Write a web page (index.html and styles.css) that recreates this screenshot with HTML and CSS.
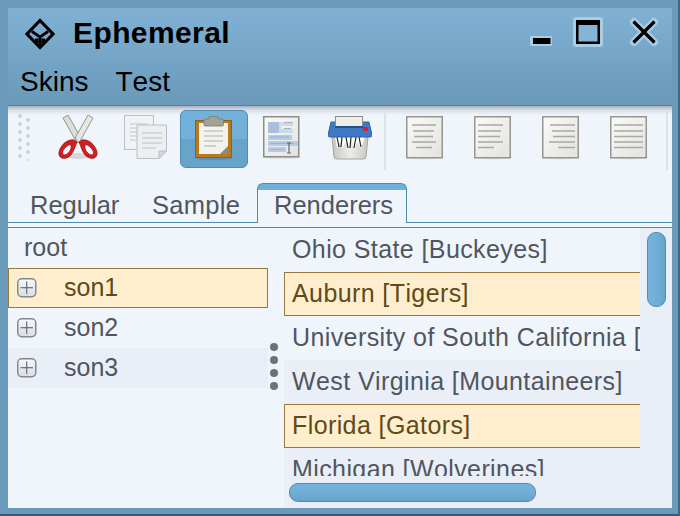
FILE: index.html
```html
<!DOCTYPE html>
<html lang="en">
<head>
<meta charset="utf-8">
<title>Ephemeral</title>
<link rel="stylesheet" href="styles.css">
</head>
<body>
<svg class="defs" width="0" height="0" aria-hidden="true">
  <defs>
    <linearGradient id="pg" x1="0" y1="0" x2="1" y2="1"><stop offset="0" stop-color="#fafaf8"/><stop offset="1" stop-color="#e2e2de"/></linearGradient>
    <linearGradient id="btn" x1="0" y1="0" x2="0" y2="1"><stop offset="0" stop-color="#f6f8fa"/><stop offset="1" stop-color="#d8dde3"/></linearGradient>
    <linearGradient id="bin" x1="0" y1="0" x2="1" y2="0"><stop offset="0" stop-color="#c4c5c0"/><stop offset=".5" stop-color="#ecece8"/><stop offset="1" stop-color="#c8c9c4"/></linearGradient>
  </defs>
</svg>
<div class="window">
  <header class="chrome">
    <div class="titlebar">
      <svg class="logo" width="30" height="32" viewBox="0 0 30 32">
        <path d="M15 2.500 L28 16 L15 29.500 L2 16 Z" fill="none" stroke="#000" stroke-width="3.200"/>
        <path d="M7 13.500 L15 19 L23 13.500 M15 19 V29 M10 22 H12 V25 M20 22 H18 V25" fill="none" stroke="#000" stroke-width="2.800"/>
      </svg>
      <span class="app-title">Ephemeral</span>
      <div class="controls">
        <svg class="ctl ctl-min" width="22" height="10" viewBox="0 0 22 10"><rect width="22" height="10" rx="1" fill="#a9cde4"/><rect x="3" y="2" width="17.500" height="6" fill="#000"/></svg>
        <svg class="ctl ctl-max" width="30" height="30" viewBox="0 0 30 30"><rect width="30" height="30" rx="3" fill="#a9cde4"/><rect x="4.250" y="4.250" width="21.500" height="21.500" fill="#86b4d4" stroke="#000" stroke-width="2.500"/><rect x="3" y="3" width="24" height="5" fill="#000"/></svg>
        <svg class="ctl ctl-close" width="30" height="30" viewBox="0 0 30 30"><path d="M5 5 L25 25 M25 5 L5 25" stroke="#a9cde4" stroke-width="8" stroke-linecap="round"/><path d="M4.500 4.500 L25.500 25.500 M25.500 4.500 L4.500 25.500" stroke="#000" stroke-width="3.200"/></svg>
      </div>
    </div>
    <nav class="menubar"><span>Skins</span><span>Test</span></nav>
  </header>

  <main class="content">
    <div class="toolbar">
      <svg class="gripper" width="14" height="50" viewBox="0 0 14 50" fill="#cfd4dc">
        <circle cx="2" cy="2" r="2"/><circle cx="10" cy="6" r="2"/><circle cx="2" cy="10" r="2"/><circle cx="10" cy="14" r="2"/><circle cx="2" cy="18" r="2"/><circle cx="10" cy="22" r="2"/><circle cx="2" cy="26" r="2"/><circle cx="10" cy="30" r="2"/><circle cx="2" cy="34" r="2"/><circle cx="10" cy="38" r="2"/><circle cx="2" cy="42" r="2"/><circle cx="10" cy="46" r="2" fill="#e3e7ed"/>
      </svg>

      <div class="tool">
        <svg width="40" height="46" viewBox="0 0 40 46">
          <ellipse cx="20" cy="41" rx="13" ry="3" fill="#d4d6da"/>
          <path d="M5 3 L10 0 L23 23 L19 28 Z" fill="#dcdcd8" stroke="#96968f" stroke-width="1"/>
          <path d="M35 3 L30 0 L17 23 L21 28 Z" fill="#e6e6e2" stroke="#96968f" stroke-width="1"/>
          <path d="M16 25 C10 24 3 29 1 37 C0 44 7 45 12 41 C16 37 17 31 19 27 Z M12 29.500 C8 31 4.500 35 4.500 38 C5 41.500 9 40 11.500 36.500 C13 34 14 31 12 29.500 Z" fill="#d11f1f" fill-rule="evenodd" stroke="#a31414" stroke-width=".8"/>
          <path d="M24 25 C30 24 37 29 39 37 C40 44 33 45 28 41 C24 37 23 31 21 27 Z M28 29.500 C32 31 35.500 35 35.500 38 C35 41.500 31 40 28.500 36.500 C27 34 26 31 28 29.500 Z" fill="#d11f1f" fill-rule="evenodd" stroke="#a31414" stroke-width=".8"/>
        </svg>
      </div>

      <div class="tool">
        <svg width="44" height="46" viewBox="0 0 44 46">
          <rect x=".5" y=".5" width="29" height="34" fill="#f0f2f4" stroke="#bcc0c4"/>
          <path d="M6 9 H24 M6 13 H24 M6 17 H24 M6 21 H14 M6 25 H14" stroke="#d0d4d8" stroke-width="1.600"/>
          <path d="M13 10 H42.500 V36 L35 43.500 H13 Z" fill="#eceef0" stroke="#bcc0c4"/>
          <path d="M35 43.500 V36 H42.500 Z" fill="#d4d6d8" stroke="#bcc0c4"/>
          <path d="M18 18 H38 M18 23 H38 M18 28 H38 M18 33 H32" stroke="#ccd0d3" stroke-width="1.600"/>
        </svg>
      </div>

      <div class="tool tool-active">
        <svg width="38" height="44" viewBox="0 0 38 44">
          <ellipse cx="19" cy="42" rx="19" ry="2" fill="#5b90b2"/>
          <rect x=".5" y="4.500" width="36" height="37" fill="#b87a1f" stroke="#8a6220" stroke-width="1"/>
          <path d="M4 7 H33 V38 H4 Z" fill="#f2f2ee"/>
          <path d="M25 38 L33 30 V38 Z" fill="#8a8a84"/>
          <path d="M9 15 H28 M9 20 H28 M9 25 H28 M9 30 H21" stroke="#c6c6c0" stroke-width="1.600"/>
          <path d="M10 3 H14 V0.500 H23 V3 H27 Q28.500 3 28.500 4.500 V9 Q28.500 10 27 10 H10 Q9 10 9 9 V4.500 Q9 3 10 3 Z" fill="#a3a294" stroke="#7c7b6f" stroke-width=".8"/>
        </svg>
      </div>

      <div class="tool">
        <svg width="38" height="44" viewBox="0 0 38 44">
          <ellipse cx="19" cy="41" rx="19" ry="2" fill="#dfe1e4"/>
          <rect x=".75" y=".75" width="35" height="40" fill="url(#pg)" stroke="#8c8c88" stroke-width="1.500"/>
          <rect x="5" y="6" width="11" height="11" fill="#95adca"/>
          <path d="M5 6 H30 V10 H18 V13 H30 V17 H5 Z" fill="#b9cce4" fill-opacity=".6"/>
          <rect x="5" y="19" width="24" height="5" fill="#b6cce6"/>
          <rect x="5" y="25" width="30" height="5" fill="#b6cce6"/>
          <rect x="5" y="31" width="18" height="5" fill="#b6cce6"/>
          <path d="M21 6.500 H30 M21 12.500 H28 M7 21 H26 M7 27.500 H31 M7 33.500 H21" stroke="#9db2cf" stroke-width="1.200"/>
          <path d="M24 27 H28 M26 27 V37 M24 37 H28" stroke="#666" stroke-width="1.200" fill="none"/>
        </svg>
      </div>

      <div class="tool">
        <svg width="44" height="44" viewBox="0 0 44 44">
          <path d="M4 21 H40 L38 41 Q38 43 35 43 H9 Q6 43 6 41 Z" fill="url(#bin)" stroke="#a4a5a0"/>
          <path d="M7 20 L9 32 L12 26 L14 33 L18 25 L20 33 L24 25 L26 33 L30 26 L33 33 L37 20 Z" fill="#fff"/>
          <path d="M9 21 L11 31 M14 21 L13 31 M18 21 L20 32 M23 21 L22 32 M28 21 L26 32 M31 21 L33 31" stroke="#222" stroke-width="1.200" fill="none"/>
          <path d="M3 6 H41 L44 19 Q44 21 42 21 H2 Q0 21 0 19 Z" fill="#3f78c4" stroke="#2f62a8"/>
          <rect x="7.500" y="0.500" width="27" height="10" fill="#eeeeea" stroke="#8f8f8a"/>
          <rect x="7" y="10" width="28" height="2" fill="#2a4f85"/>
          <rect x="35" y="11" width="5" height="4" rx="1" fill="#e01b24"/>
        </svg>
      </div>

      <i class="tool-sep"></i>

      <div class="tool">
        <svg width="38" height="44" viewBox="0 0 38 44"><ellipse cx="19" cy="41" rx="19" ry="2.500" fill="#dfe1e4"/><rect fill="url(#pg)" class="page" x=".75" y=".75" width="35.500" height="41"/><path class="lines" d="M6 9 H30 M7 15 H28 M8 20.500 H27 M6 26 H30 M10 31.500 H26"/></svg>
      </div>
      <div class="tool">
        <svg width="38" height="44" viewBox="0 0 38 44"><ellipse cx="19" cy="41" rx="19" ry="2.500" fill="#dfe1e4"/><rect fill="url(#pg)" class="page" x=".75" y=".75" width="35.500" height="41"/><path class="lines" d="M4 9 H29 M4 15 H27 M4 20.500 H26 M4 26 H29 M4 31.500 H20"/></svg>
      </div>
      <div class="tool">
        <svg width="38" height="44" viewBox="0 0 38 44"><ellipse cx="19" cy="41" rx="19" ry="2.500" fill="#dfe1e4"/><rect fill="url(#pg)" class="page" x=".75" y=".75" width="35.500" height="41"/><path class="lines" d="M8 9 H33 M10 15 H33 M11 20.500 H33 M7 26 H33 M16 31.500 H33"/></svg>
      </div>
      <div class="tool">
        <svg width="38" height="44" viewBox="0 0 38 44"><ellipse cx="19" cy="41" rx="19" ry="2.500" fill="#dfe1e4"/><rect fill="url(#pg)" class="page" x=".75" y=".75" width="35.500" height="41"/><path class="lines" d="M4 9 H33 M4 15 H33 M4 20.500 H33 M4 26 H33 M4 31.500 H33"/></svg>
      </div>

      <i class="tool-sep tool-sep-end"></i>
    </div>

    <div class="tabs">
      <span class="tab tab-first">Regular</span>
      <span class="tab tab-second">Sample</span>
      <span class="tab tab-active">Renderers</span>
      <span class="tab-rest"></span>
    </div>

    <div class="split">
      <div class="tree">
        <div class="root">root</div>
        <div class="node node-selected"><svg class="plus" width="20" height="20" viewBox="0 0 20 20"><rect fill="url(#btn)" x=".75" y=".75" width="18" height="18" rx="4"/><path d="M9.750 3.500 V16 M3.500 9.750 H16"/></svg><span>son1</span></div>
        <div class="node"><svg class="plus" width="20" height="20" viewBox="0 0 20 20"><rect fill="url(#btn)" x=".75" y=".75" width="18" height="18" rx="4"/><path d="M9.750 3.500 V16 M3.500 9.750 H16"/></svg><span>son2</span></div>
        <div class="node node-alt"><svg class="plus" width="20" height="20" viewBox="0 0 20 20"><rect fill="url(#btn)" x=".75" y=".75" width="18" height="18" rx="4"/><path d="M9.750 3.500 V16 M3.500 9.750 H16"/></svg><span>son3</span></div>
      </div>

      <div class="divider"><b></b><b></b><b></b><b></b></div>

      <div class="scroller">
        <div class="list-col">
          <div class="rows">
            <div class="row">Ohio State [Buckeyes]</div>
            <div class="row row-selected">Auburn [Tigers]</div>
            <div class="row">University of South California [Trojans]</div>
            <div class="row row-alt">West Virginia [Mountaineers]</div>
            <div class="row row-selected">Florida [Gators]</div>
            <div class="row row-alt row-cut">Michigan [Wolverines]</div>
          </div>
          <div class="hbar"><div class="hthumb"></div></div>
        </div>
        <div class="vbar"><div class="vthumb"></div></div>
      </div>
    </div>
  </main>
</div>
</body>
</html>
```

FILE: styles.css
```css
* { box-sizing: border-box; }
html, body { margin: 0; padding: 0; }
body {
  width: 680px;
  height: 516px;
  overflow: hidden;
  font-family: "Liberation Sans", Arial, sans-serif;
  font-kerning: none;
}
.defs { display: block; width: 0; height: 0; }
.window {
  width: 680px;
  height: 516px;
  display: flex;
  flex-direction: column;
  padding: 8px 6px 6px 8px;
  background: #6a9aba;
  border-right: 2px solid #3a6886;
  border-bottom: 2px solid #2f5c7c;
}
.chrome {
  flex: none;
  height: 98px;
  background: linear-gradient(#80b1d4, #6a99b9);
  border-bottom: 1px solid #55839f;
  color: #000;
}
.titlebar {
  height: 50px;
  display: flex;
  align-items: center;
  padding-left: 17px;
}
.logo { flex: none; margin-top: 2px; }
.app-title {
  margin-left: 18px;
  font-size: 30px;
  font-weight: 700;
  letter-spacing: .4px;
  line-height: 50px;
}
.controls {
  margin-left: auto;
  align-self: flex-start;
  margin-top: 9px;
  display: flex;
  align-items: flex-start;
  padding-right: 13px;
}
.ctl { display: block; flex: none; }
.ctl-min { margin: 19px 21px 0 0; }
.ctl-max { margin-right: 26px; }
.menubar {
  display: flex;
  gap: 27px;
  padding-left: 12px;
  font-size: 28px;
  line-height: 48px;
  height: 47px;
}

.content {
  flex: 1;
  min-height: 0;
  background: #f0f5fc;
  display: flex;
  flex-direction: column;
}
.toolbar {
  flex: none;
  height: 65px;
  display: flex;
  align-items: flex-start;
  background: linear-gradient(#a8b0bb 0, #d8dee6 4px, #f0f5fc 9px);
  padding: 4px 0 0 10px;
}
.gripper { flex: none; margin-top: 4px; }
.tool {
  flex: none;
  width: 68px;
  height: 58px;
  display: flex;
  align-items: center;
  justify-content: center;
  padding-bottom: 3px;
}
.tool svg { display: block; }
.gripper + .tool { margin-left: 12px; }
.tool-active {
  background: linear-gradient(#73b0da 0, #73b0da 50%, #68a3c9 50%, #68a3c9 100%);
  border: 1px solid #4f8cb0;
  border-radius: 6px;
}
.tool-sep {
  flex: none;
  width: 2px;
  height: 60px;
  background: #dde2e9;
  margin-right: 5px;
}
.tool-sep-end { margin-left: 3px; margin-right: 0; }
.page { stroke: #959591; stroke-width: 1.5; }
.lines { stroke: #a8a8a4; stroke-width: 1.7; fill: none; }

.tabs {
  flex: none;
  height: 52px;
  display: flex;
  align-items: flex-end;
  font-size: 25.5px;
  color: #50565f;
}
.tab {
  display: block;
  height: 40px;
  line-height: 44px;
  border-bottom: 1px solid #4f8cb0;
}
.tab-first { width: 127px; padding-left: 22px; }
.tab-second { width: 122px; padding-left: 17px; letter-spacing: .3px; }
.tab-active {
  width: 150px;
  background: linear-gradient(#6fb0da 0, #6fb0da 6px, #f0f5fc 6px);
  border: 1px solid #4f8cb0;
  border-bottom: 0;
  border-radius: 6px 6px 0 0;
  padding-left: 16px;
  line-height: 42px;
}
.tab-rest { flex: 1; height: 1px; background: #4f8cb0; }

.split {
  flex: 1;
  min-height: 0;
  margin-top: 4px;
  border-top: 1px solid #4f8cb0;
  display: flex;
  font-size: 25px;
  color: #50565f;
}
.tree { flex: none; width: 260px; }
.root { height: 40px; line-height: 38px; padding-left: 16px; }
.node {
  height: 40px;
  display: flex;
  align-items: center;
  padding-left: 9px;
  line-height: 36px;
}
.node span { margin: 0 0 2px 27px; }
.plus { flex: none; display: block; }
.plus rect { stroke: #84898f; stroke-width: 1.5; }
.plus path { stroke: #50565f; stroke-width: 1; fill: none; }
.node-selected {
  background: #ffeecd;
  border: 1px solid #9a7a3c;
  color: #5f4a1a;
  padding-left: 8px;
}
.node-alt { background: #eaeff7; }

.divider {
  flex: none;
  width: 16px;
  display: flex;
  flex-direction: column;
  align-items: center;
  gap: 5px;
  padding: 115px 4px 0 0;
}
.divider b {
  display: block;
  width: 8px;
  height: 8px;
  border-radius: 50%;
  background: #6e7379;
}

.scroller {
  flex: 1;
  min-width: 0;
  background: #eaeff7;
  display: flex;
}
.list-col {
  flex: none;
  width: 356px;
  display: flex;
  flex-direction: column;
  letter-spacing: .4px;
}
.rows { height: 248px; overflow: hidden; }
.row {
  height: 44px;
  line-height: 43px;
  padding-left: 8px;
  white-space: nowrap;
  overflow: hidden;
  background: #f0f5fc;
}
.row-alt { background: #eaeff7; }
.row-selected {
  background: #ffeecd;
  color: #5f4a1a;
  border: 1px solid #9a7a3c;
  border-right: 0;
  padding-left: 7px;
  line-height: 41px;
}
.hbar { padding: 7px 0 0 5px; }
.hthumb {
  width: 247px;
  height: 19px;
  border-radius: 9px;
  background: linear-gradient(#76b4de 0, #70aed6 50%, #68a2c8 100%);
  border: 1px solid #4f8cb0;
}
.vbar { flex: none; width: 32px; padding: 4px 0 0 7px; }
.vthumb {
  width: 19px;
  height: 75px;
  border-radius: 9px;
  background: linear-gradient(90deg, #76b4de 0, #70aed6 50%, #68a2c8 100%);
  border: 1px solid #4f8cb0;
}
```
